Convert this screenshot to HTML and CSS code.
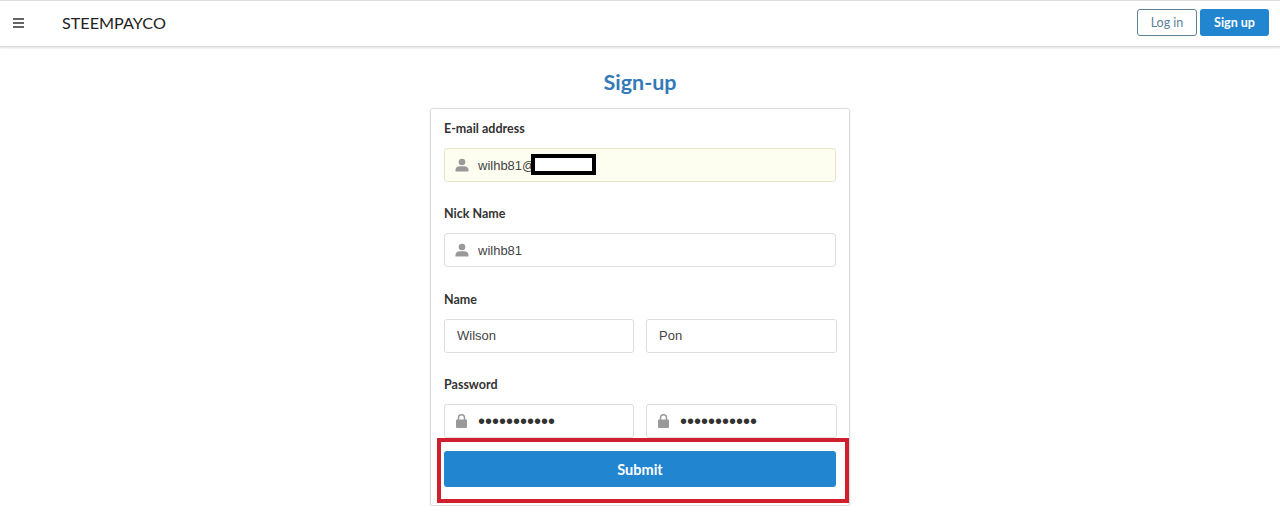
FILE: index.html
```html
<!DOCTYPE html>
<html>

<head>
    <title>Sign-up</title>
    <link rel="stylesheet" href="styles.css">
</head>

<body>
    <div class="menu">
        <span class="menu-icon">
            <svg width="11" height="10" viewBox="0 0 11 10">
                <path d="M0 1h11M0 5h11M0 9h11" stroke="#333" stroke-width="1.6" fill="none"/>
            </svg>
        </span>
        <span class="brand">STEEMPAYCO</span>
        <div class="menu-right">
            <button class="btn-basic">Log in</button>
            <button class="btn-blue">Sign up</button>
        </div>
    </div>

    <h2 class="title">Sign-up</h2>

    <div class="signup-wrap">
        <form class="segment">
            <div class="form-group">
                <label>E-mail address</label>
                <div class="input-icon autofill">
                    <svg class="icon" width="14" height="14" viewBox="0 0 14 14">
                        <circle cx="7" cy="4" r="3.3" fill="#999"/>
                        <path d="M0.5 13.5v-1.800c0-2.200 2-3.200 4-3.500h5c2 .3 4 1.300 4 3.500v1.800z" fill="#999"/>
                    </svg>
                    <input type="text" value="wilhb81@">
                    <span class="redact"></span>
                </div>
            </div>
            <div class="form-group">
                <label>Nick Name</label>
                <div class="input-icon">
                    <svg class="icon" width="14" height="14" viewBox="0 0 14 14">
                        <circle cx="7" cy="4" r="3.3" fill="#999"/>
                        <path d="M0.5 13.500v-1.800c0-2.200 2-3.200 4-3.500h5c2 .3 4 1.300 4 3.500v1.800z" fill="#999"/>
                    </svg>
                    <input type="text" value="wilhb81">
                </div>
            </div>
            <div class="form-group">
                <label>Name</label>
                <div class="two-fields">
                    <div class="input-plain"><input type="text" value="Wilson"></div>
                    <div class="input-plain"><input type="text" value="Pon"></div>
                </div>
            </div>
            <div class="form-group last">
                <label>Password</label>
                <div class="two-fields">
                    <div class="input-icon">
                        <svg class="icon lock" width="11" height="14" viewBox="0 0 11 14">
                            <path d="M2.500 6V3.800a3 3 0 0 1 6 0V6" stroke="#999" stroke-width="1.500" fill="none"/>
                            <rect x="0" y="5.500" width="11" height="8.500" rx="1" fill="#999"/>
                        </svg>
                        <input type="password" value="wilhb81wilh">
                    </div>
                    <div class="input-icon">
                        <svg class="icon lock" width="11" height="14" viewBox="0 0 11 14">
                            <path d="M2.500 6V3.800a3 3 0 0 1 6 0V6" stroke="#999" stroke-width="1.500" fill="none"/>
                            <rect x="0" y="5.500" width="11" height="8.500" rx="1" fill="#999"/>
                        </svg>
                        <input type="password" value="wilhb81wilh">
                    </div>
                </div>
            </div>
            <button type="button" class="submit">Submit</button>
        </form>
        <div class="highlight"></div>
    </div>
</body>

</html>
```

FILE: styles.css
```css
* {
    box-sizing: border-box;
}

body {
    margin: 0;
    background: #fff;
    color: #333;
    font-family: Lato, "Liberation Sans", sans-serif;
    font-size: 13px;
}

.menu {
    display: flex;
    align-items: center;
    height: 47px;
    padding: 0 11px 2px 13px;
    border-top: 1px solid #ddd;
    border-bottom: 1px solid #ddd;
    box-shadow: 0 1px 2px rgba(34, 36, 38, 0.15);
}

.menu-icon {
    display: flex;
    width: 49px;
}

.brand {
    font-size: 16.2px;
    color: #222;
}

.menu-right {
    display: flex;
    gap: 3px;
    margin-left: auto;
}

.menu-right button {
    height: 27px;
    border-radius: 3px;
    font-family: inherit;
    font-size: 12.5px;
}

.btn-basic {
    width: 60px;
    background: #fff;
    color: #5d7f9b;
    border: 1px solid #5f8298;
}

.btn-blue {
    width: 69px;
    background: #2185d0;
    color: #fff;
    border: none;
    font-weight: bold;
}

.title {
    margin: 21px 0 12px;
    text-align: center;
    font-size: 21.5px;
    line-height: 28px;
    color: #337ab7;
}

.signup-wrap {
    position: relative;
    width: 420px;
    margin: 0 auto;
}

.segment {
    height: 398px;
    padding: 11px 13px 10px;
    border: 1px solid #ddd;
    border-radius: 3px;
    box-shadow: 0 1px 2px rgba(34, 36, 38, 0.15);
}

.form-group {
    margin-bottom: 23.4px;
}

.form-group.last {
    margin-bottom: 13px;
}

label {
    display: block;
    height: 18px;
    line-height: 18px;
    margin-bottom: 10px;
    font-size: 12.5px;
    font-weight: bold;
    color: #333;
}

.two-fields {
    display: grid;
    grid-template-columns: 190px 191px;
    gap: 12px;
}

.input-icon,
.input-plain {
    position: relative;
    height: 34px;
    border: 1px solid #dedede;
    border-radius: 3px;
}

.input-icon input,
.input-plain input {
    width: 100%;
    height: 100%;
    border: none;
    outline: none;
    background: transparent;
    color: #444;
    font-family: "Liberation Sans", Arial, sans-serif;
    font-size: 13px;
}

.input-icon input {
    padding: 0 0 0 33px;
}

.input-icon input[type="password"] {
    color: #333;
    font-size: 20px;
}

.input-plain input {
    padding: 0 0 0 12px;
}

.autofill {
    background: #fdfdf0;
    border-color: #e6e6cf;
}

.icon {
    position: absolute;
    left: 10px;
    top: 9px;
}

.lock {
    left: 11px;
}

.redact {
    position: absolute;
    left: 86px;
    top: 5px;
    width: 65px;
    height: 21px;
    background: #fff;
    border: 4px solid #000;
}

.submit {
    display: block;
    width: 100%;
    height: 36px;
    background: #2185d0;
    color: #fff;
    border: none;
    border-radius: 3px;
    font-family: inherit;
    font-size: 14.5px;
    font-weight: bold;
}

.highlight {
    position: absolute;
    left: 7px;
    top: 330px;
    width: 412px;
    height: 65px;
    border: 4px solid #d0202e;
}
```
